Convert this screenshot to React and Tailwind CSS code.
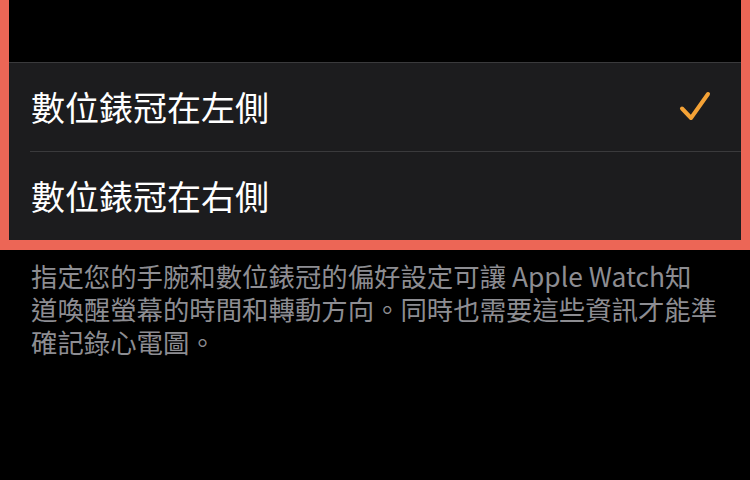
export default function App() {
  const font = { fontFamily: '"Noto Sans CJK TC", "Noto Sans", sans-serif' };
  const lines = [
    "指定您的手腕和數位錶冠的偏好設定可讓 Apple Watch知",
    "道喚醒螢幕的時間和轉動方向。同時也需要這些資訊才能準",
    "確記錄心電圖。",
  ];
  return (
    <div className="w-[750px] h-[480px] bg-black overflow-hidden" style={font}>
      <div className="border-x-[9px] border-b-[10px] border-[#ec6656]">
        <div className="h-[62px] bg-black" />
        <div className="bg-[#1c1c1e] border-t border-[#3a3a3c]">
          <div className="flex items-center justify-between h-[88px] pl-[22px] pr-[30px]">
            <span className="text-[34px] leading-none text-white">數位錶冠在左側</span>
            <svg width="32" height="32" viewBox="0 0 32 32" fill="none">
              <path d="M3 17.5 L12 27 L29 3" stroke="#f4a236" strokeWidth="4" strokeLinecap="round" strokeLinejoin="round" />
            </svg>
          </div>
          <div className="ml-[21px] h-px bg-[#3a3a3c]" />
          <div className="flex items-center h-[88px] pl-[22px]">
            <span className="text-[34px] leading-none text-white">數位錶冠在右側</span>
          </div>
        </div>
      </div>
      <div className="flex flex-col pl-[31px] pt-[10px] text-[#8d8d92]">
        {lines.map((l) => (
          <div key={l} className="h-[33px] flex items-center text-[26.4px] leading-none whitespace-nowrap">
            {l}
          </div>
        ))}
      </div>
    </div>
  );
}
